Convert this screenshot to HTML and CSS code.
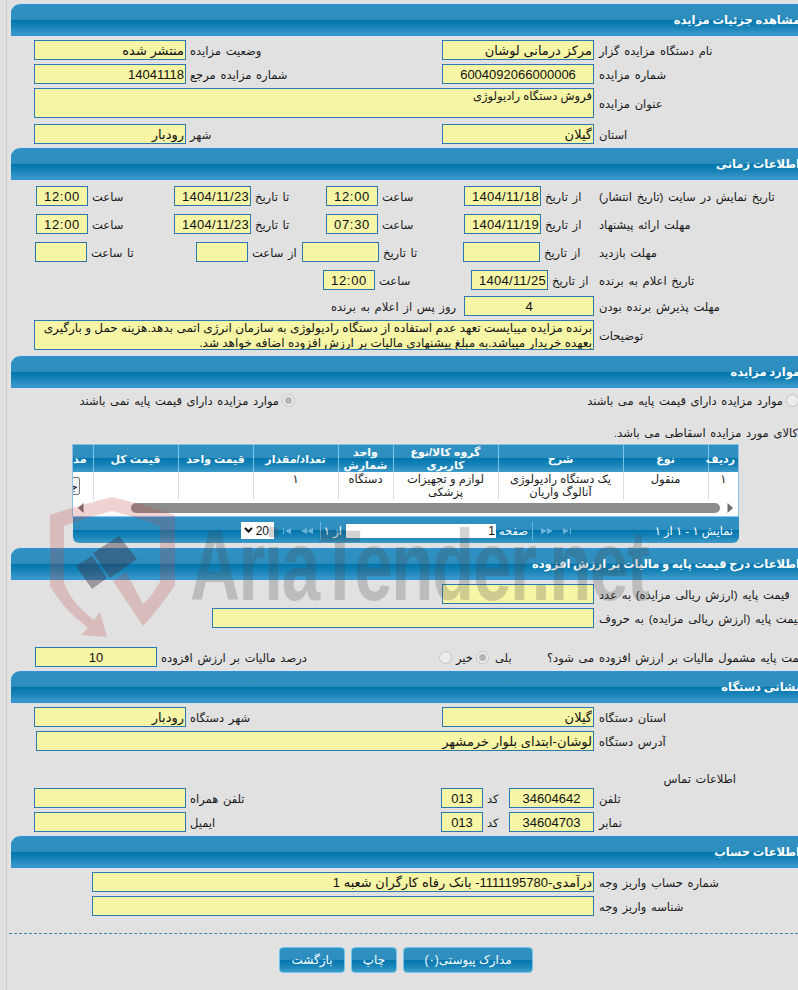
FILE: index.html
```html
<!DOCTYPE html>
<html lang="fa">
<head>
<meta charset="utf-8">
<title>مشاهده جزئیات مزایده</title>
<link rel="stylesheet" href="styles.css">
</head>
<body>
<div class="page">
<div class="sheet">

<h2 class="bar">مشاهده جزئیات مزایده</h2>
<div class="row main mt4"><input class="in" readonly value="منتشر شده"><label class="lb">وضعیت مزایده</label><input class="in" readonly value="مرکز درمانی لوشان"><label class="lb lbr">نام دستگاه مزایده گزار</label></div>
<div class="row main mt4"><input class="in" readonly value="14041118"><label class="lb">شماره مزایده مرجع</label><input class="in num" readonly value="6004092066000006"><label class="lb lbr">شماره مزایده</label></div>
<div class="row wide mt4 tall"><textarea class="in title" readonly>فروش دستگاه رادیولوژی</textarea><label class="lb lbr">عنوان مزایده</label></div>
<div class="row main mt6"><input class="in" readonly value="رودبار"><label class="lb">شهر</label><input class="in" readonly value="گیلان"><label class="lb lbr">استان</label></div>

<h2 class="bar mt4">اطلاعات زمانی</h2>
<div class="row time mt6"><input class="in c t" readonly value="12:00"><label class="lb">ساعت</label><input class="in d" readonly value="1404/11/23"><label class="lb">تا تاریخ</label><input class="in c t" readonly value="12:00"><label class="lb">ساعت</label><input class="in d" readonly value="1404/11/18"><label class="lb">از تاریخ</label><label class="lb">تاریخ نمایش در سایت (تاریخ انتشار)</label></div>
<div class="row time mt8"><input class="in c t" readonly value="12:00"><label class="lb">ساعت</label><input class="in d" readonly value="1404/11/23"><label class="lb">تا تاریخ</label><input class="in c t" readonly value="07:30"><label class="lb">ساعت</label><input class="in d" readonly value="1404/11/19"><label class="lb">از تاریخ</label><label class="lb">مهلت ارائه پیشنهاد</label></div>
<div class="row visit mt8"><input class="in" readonly><label class="lb">تا ساعت</label><input class="in" readonly><label class="lb">از ساعت</label><input class="in" readonly><label class="lb">تا تاریخ</label><input class="in" readonly><label class="lb">از تاریخ</label><label class="lb">مهلت بازدید</label></div>
<div class="row notice mt8"><input class="in c t" readonly value="12:00"><label class="lb">ساعت</label><input class="in d" readonly value="1404/11/25"><label class="lb">از تاریخ</label><label class="lb">تاریخ اعلام به برنده</label></div>
<div class="row accept mt6"><label class="lb tr">روز پس از اعلام به برنده</label><input class="in c" readonly value="4"><label class="lb lbr">مهلت پذیرش برنده بودن</label></div>
<div class="row wide mt4 tall"><textarea class="in notes" readonly>برنده مزایده میبایست تعهد عدم استفاده از دستگاه رادیولوژی به سازمان انرژی اتمی بدهد.هزینه حمل و بارگیری بعهده خریدار میباشد.به مبلغ پیشنهادی مالیات بر ارزش افزوده اضافه خواهد شد.</textarea><label class="lb lbr">توضیحات</label></div>

<h2 class="bar mt6">موارد مزایده</h2>
<div class="row radios mt4"><label class="lb tr">موارد مزایده دارای قیمت پایه نمی باشند</label><input class="rd" type="radio" name="base" checked disabled><span></span><label class="lb tr">موارد مزایده دارای قیمت پایه می باشند</label><input class="rd" type="radio" name="base" disabled></div>
<p class="note">کالای مورد مزایده اسقاطی می باشد.</p>

<div class="grid">
  <div class="gridview">
  <table>
    <colgroup><col class="c30"><col class="c85"><col class="c125"><col class="c105"><col class="c55"><col class="c85"><col class="c75"><col class="c85"><col class="c60"></colgroup>
    <thead><tr><th>ردیف</th><th>نوع</th><th>شرح</th><th>گروه کالا/نوع کاربری</th><th>واحد شمارش</th><th>تعداد/مقدار</th><th>قیمت واحد</th><th>قیمت کل</th><th class="cut">مدارک</th></tr></thead>
    <tbody><tr><td>۱</td><td>منقول</td><td>یک دستگاه رادیولوژی آنالوگ واریان</td><td>لوازم و تجهیزات پزشکی</td><td>دستگاه</td><td>۱</td><td></td><td></td><td class="cut"><button class="mini" type="button">جزئیات</button></td></tr></tbody>
  </table>
  </div>
  <div class="scroll">
    <svg class="arrow" width="6" height="10" viewBox="0 0 6 10"><path d="M5.5 0v10L0 5z"/></svg>
    <div class="thumb"></div>
    <svg class="arrow" width="6" height="10" viewBox="0 0 6 10"><path d="M.5 0v10L6 5z"/></svg>
  </div>
  <div class="pager">
    <div class="sizebox">
      <select class="size"><option>20</option><option>50</option></select>
      <svg class="chev" width="9" height="6" viewBox="0 0 9 6"><path d="M1 1l3.5 3.5L8 1" fill="none" stroke="#111" stroke-width="2"/></svg>
    </div>
    <svg class="pi pi1" width="8" height="6" viewBox="0 0 8 6"><path d="M0 0h1v6H0zM8 0v6L2 3z"/></svg>
    <svg class="pi pi2" width="12" height="6" viewBox="0 0 12 6"><path d="M6 0v6L0 3zM12 0v6L6 3z"/></svg>
    <i class="sep s1"></i>
    <span class="pt w-of">از ۱</span>
    <input class="pg" readonly value="1">
    <span class="pt w-page">صفحه</span>
    <i class="sep"></i>
    <svg class="pi pi3" width="12" height="6" viewBox="0 0 12 6"><path d="M0 0v6l6-3zM6 0v6l6-3z"/></svg>
    <svg class="pi pi4" width="8" height="6" viewBox="0 0 8 6"><path d="M0 0v6l6-3zM7 0h1v6H7z"/></svg>
    <span class="pt total">نمایش ۱ - ۱ از ۱</span>
  </div>
</div>

<h2 class="bar mt5">اطلاعات درج قیمت پایه و مالیات بر ارزش افزوده</h2>
<div class="row single mt4"><input class="in" readonly><label class="lb lbr">قیمت پایه (ارزش ریالی مزایده) به عدد</label></div>
<div class="row words mt4"><input class="in" readonly><label class="lb lbr">قیمت پایه (ارزش ریالی مزایده) به حروف</label></div>
<div class="row tax mt19"><input class="in c" readonly value="10"><label class="lb">درصد مالیات بر ارزش افزوده</label><input class="rd" type="radio" name="vat" disabled><label class="lb">خیر</label><input class="rd" type="radio" name="vat" checked disabled><label class="lb bale">بلی</label><label class="lb">قیمت پایه مشمول مالیات بر ارزش افزوده می شود؟</label></div>

<h2 class="bar mt4">نشانی دستگاه</h2>
<div class="row main mt4"><input class="in" readonly value="رودبار"><label class="lb">شهر دستگاه</label><input class="in" readonly value="گیلان"><label class="lb lbr">استان دستگاه</label></div>
<div class="row addr mt4"><input class="in" readonly value="لوشان-ابتدای بلوار خرمشهر"><label class="lb lbr">آدرس دستگاه</label></div>
<p class="contact">اطلاعات تماس</p>
<div class="row phone"><input class="in" readonly><label class="lb">تلفن همراه</label><input class="in c" readonly value="013"><label class="lb">کد</label><input class="in c" readonly value="34604642"><label class="lb lbr">تلفن</label></div>
<div class="row phone mt4"><input class="in" readonly><label class="lb">ایمیل</label><input class="in c" readonly value="013"><label class="lb">کد</label><input class="in c" readonly value="34604703"><label class="lb lbr">نمابر</label></div>

<h2 class="bar mt4">اطلاعات حساب</h2>
<div class="row acct mt4"><input class="in" readonly value="درآمدی-1111195780- بانک رفاه کارگران شعبه 1"><label class="lb lbr">شماره حساب واریز وجه</label></div>
<div class="row acct mt4"><input class="in" readonly><label class="lb lbr">شناسه واریز وجه</label></div>

<div class="actions">
  <button class="btn b1" type="button">بازگشت</button>
  <button class="btn b2" type="button">چاپ</button>
  <button class="btn b3" type="button">مدارک پیوستی(۰)</button>
</div>
</div>

<div class="mark">
  <svg class="shield" width="140" height="150" viewBox="45 492 140 150">
    <path class="red" d="M50 515Q80 505 112 497Q145 505 175 515V585Q160 608 143 626L113 581L126 572L143 604Q152 596 160 582V526Q135 517 112 511Q88 517 64 526V582Q70 602 94 620L100 612L107 637L81 635L88 628Q62 608 50 586Z"/>
    <path class="gavel" d="M76 566L92 556L107 578L92 589ZM93 553L119 536L137 559L110 578Z"/>
  </svg>
  <span class="brand">AriaTender.net</span>
</div>
</div>
</body>
</html>
```
FILE: styles.css
```css
* { box-sizing: border-box; }
html, body { margin: 0; padding: 0; background: #e1e1e1; }
body { font-family: "Liberation Sans", "DejaVu Sans", sans-serif; font-size: 12px; color: #1a1a1a; }

.page { position: relative; width: 798px; height: 990px; overflow: hidden; padding-left: 6px; }
.sheet { width: 812px; height: 990px; margin: 0; padding-left: 4px; padding-top: 4px; border-left: 1px solid #cdcdcd; }

.bar {
  margin: 0; height: 32px; padding-right: 18px; direction: rtl; text-align: right;
  font-size: 11.5px; font-weight: bold; line-height: 31px; color: #fff; white-space: nowrap; word-spacing: -.5px;
  border-top: 1px solid #2f93dc; border-bottom: 1px solid #2f93dc;
  border-top-left-radius: 9px;
  background: linear-gradient(#2f91c2 0, #2e8dbd 48%, #0076ae 50%, #1a84b8 75%, #3d9bca 100%);
}

.mt4 { margin-top: 4px; } .mt5 { margin-top: 5px; } .mt6 { margin-top: 6px; } .mt8 { margin-top: 8px; } .mt19 { margin-top: 19px; }

.row { display: grid; height: 20px; align-items: center; }
.tall { height: 30px; }
.main { padding-left: 23px; grid-template-columns: 152px 256px 152px auto; }
.wide { padding-left: 23px; grid-template-columns: 560px auto; }
.time { padding-left: 25px; grid-template-columns: 52px 86px 77px 75px 52px 86px 77px 54px auto; }
.visit { padding-left: 24px; grid-template-columns: 52px 109px 52px 54px 77px 84px 77px 55px auto; }
.notice { padding-left: 312px; grid-template-columns: 52px 96px 77px 47px auto; }
.accept { padding-left: 327px; grid-template-columns: 126px 130px auto; }
.radios { padding-left: 70px; height: 16px; grid-template-columns: 201px 13px 297px 194px 13px; }
.single { padding-left: 431px; grid-template-columns: 152px auto; }
.words { padding-left: 201px; grid-template-columns: 382px auto; }
.tax { padding-left: 24px; grid-template-columns: 122px 282px 13px 24px 13px 54px auto; }
.addr { padding-left: 25px; grid-template-columns: 558px auto; }
.phone { padding-left: 23px; grid-template-columns: 152px 255px 42px 26px 85px auto; }
.acct { padding-left: 81px; grid-template-columns: 502px auto; }

.in {
  display: block; width: 100%; height: 100%; margin: 0; padding: 0 1px; direction: rtl; text-align: right;
  border: 1px solid #2a79ae; border-radius: 0; outline: 0; background: #f7f5a6; color: #111;
  font-family: inherit; font-size: 13px; resize: none; overflow: hidden;
}
textarea.in { line-height: 15px; }
.notes { font-size: 12px; }
.title { font-size: 11.5px; }
.c, .num { text-align: center; }
.d { letter-spacing: .3px; }
.t { letter-spacing: .7px; }

.lb { display: block; padding: 2px 0 0 4px; direction: rtl; text-align: left; white-space: nowrap; font-size: 11.5px; word-spacing: 1.5px; }
.lbr { padding-left: 5px; }
.tr { padding-left: 0; padding-right: 3px; text-align: right; }
.accept .tr { padding-right: 8px; }
.bale { padding-left: 6px; }

.rd { appearance: none; -webkit-appearance: none; position: relative; width: 13px; height: 13px; margin: 0; border: 1px solid #c4c4c4; border-radius: 50%; background: #ececec; }
.rd:checked::before { content: ""; position: absolute; left: 2px; top: 2px; width: 7px; height: 7px; border-radius: 50%; background: #b4b4b4; }

.note { margin: 17px 0 0; height: 16px; padding-right: 20px; direction: rtl; text-align: right; line-height: 16px; white-space: nowrap; font-size: 11.5px; word-spacing: 1.5px; }

.grid { margin: 3px 0 0 61px; width: 667px; }
.gridview { height: 56px; overflow: hidden; direction: rtl; border: 1px solid #8fc0e2; border-bottom: 0; background: #fff; }
table { width: 705px; table-layout: fixed; border-collapse: collapse; direction: rtl; }
.c30 { width: 30px; } .c85 { width: 85px; } .c125 { width: 125px; } .c105 { width: 105px; } .c55 { width: 55px; } .c75 { width: 75px; } .c60 { width: 60px; }
th {
  height: 26px; padding: 1px 3px 0; color: #fff; font-size: 11px; font-weight: bold; line-height: 13px; text-align: center;
  border-left: 1px solid #7cc3e8;
  background: linear-gradient(#2f91c2 0, #2e8dbd 48%, #0076ae 50%, #1a84b8 75%, #3d9bca 100%);
}
td { height: 29px; padding: 1px 3px 0; vertical-align: top; text-align: center; font-size: 11.5px; line-height: 13px; border-left: 1px solid #ddd; border-bottom: 1px solid #ddd; }
.cut { text-align: right; padding: 0 6px 0 0; white-space: nowrap; overflow: hidden; border-left: 0; }
th.cut { line-height: 26px; }
.mini { display: block; width: 54px; height: 18px; margin: 5px 7px 0 0; padding: 0 1px; border: 1px solid #777; border-radius: 2px; background: #f0f0f0; font: 11px "Liberation Sans", "DejaVu Sans", sans-serif; white-space: nowrap; overflow: hidden; text-align: right; direction: rtl; }

.scroll { display: flex; align-items: center; height: 17px; padding: 0 5px; direction: ltr; background: #fff; border: 1px solid #8fc0e2; border-top: 0; }
.thumb { height: 10px; margin: 0 7px 0 47px; flex: 1; border-radius: 5px; background: #8c8c8c; }
.arrow { fill: #6e6e6e; flex: none; }

.pager {
  display: flex; align-items: center; height: 26px; margin-left: 1px; direction: ltr; border-radius: 0 0 6px 6px;
  border-top: 1px solid #2f93dc; padding-left: 168px;
  background: linear-gradient(#2f91c2 0, #2e8dbd 48%, #0076ae 50%, #1a84b8 75%, #3d9bca 100%);
  color: #fff; font-size: 11.5px;
}
.sizebox { position: relative; width: 33px; height: 17px; flex: none; }
.size { appearance: none; -webkit-appearance: none; display: block; width: 33px; height: 17px; padding: 0 5px 0 0; border: 0; border-radius: 0; background: #fff; direction: rtl; font: 12px "Liberation Sans", sans-serif; color: #111; }
.chev { position: absolute; left: 3px; top: 5px; }
.pi { fill: #6db5d8; flex: none; }
.pi1 { margin-left: 9px; } .pi2 { margin-left: 10px; } .pi3 { margin-left: 8px; } .pi4 { margin-left: 10px; }
.sep { width: 1px; height: 18px; margin-left: 4px; background: #6db5d8; flex: none; }
.s1 { margin-left: 7px; }
.pt { margin-left: 4px; white-space: nowrap; direction: rtl; text-align: center; }
.w-of { width: 17px; flex: none; }
.w-page { width: 28px; flex: none; }
.pg { flex: none; width: 150px; height: 14px; margin: 0 0 0 4px; padding: 0 1px; border: 0; background: #fff; direction: rtl; text-align: right; font: 12px "Liberation Sans", sans-serif; color: #111; outline: 0; }
.total { margin-left: auto; padding-right: 6px; }

.contact { margin: 19px 0 0; height: 18px; padding-right: 82px; direction: rtl; text-align: right; line-height: 18px; font-size: 11.5px; word-spacing: 1.5px; }

.actions { display: flex; gap: 6px; margin-top: 17px; padding: 13px 0 0 270px; border-top: 1px dashed #3f84ad; margin-left: -2px; }
.btn { height: 26px; padding: 0; border: 1px solid #6cc8ea; border-radius: 4px; color: #fff; font: 12px "Liberation Sans", "DejaVu Sans", sans-serif;
  background: linear-gradient(#2f91c2 0, #2e8dbd 48%, #0076ae 50%, #1a84b8 75%, #3d9bca 100%); }
.b1 { width: 66px; } .b2 { width: 46px; } .b3 { width: 130px; }

.mark { position: absolute; left: 0; top: 0; width: 798px; height: 990px; pointer-events: none; }
.shield { position: absolute; left: 45px; top: 492px; }
.red { fill: rgba(190, 70, 70, .24); }
.gavel { fill: rgba(60, 50, 70, .42); }
.brand { position: absolute; left: 190px; top: 508px; font: bold 100px "Liberation Sans", sans-serif; letter-spacing: -2px; color: rgba(70, 70, 70, .24); white-space: nowrap; transform-origin: 0 0; transform: scaleX(.69); }
```
